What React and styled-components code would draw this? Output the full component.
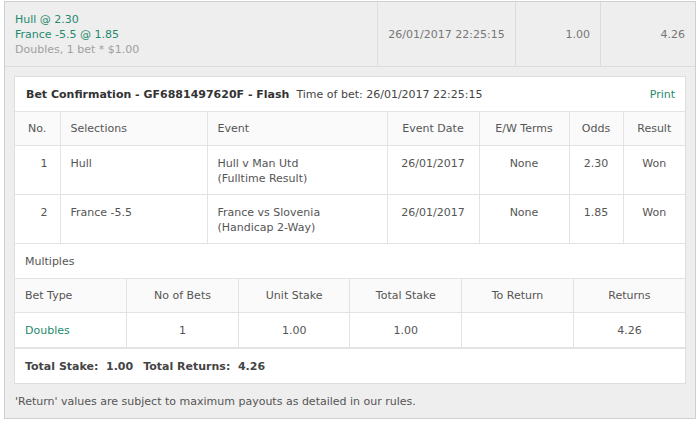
import styled, { createGlobalStyle } from "styled-components";

const GlobalStyle = createGlobalStyle`
  body {
    margin: 0;
    background: #ffffff;
    font-family: "DejaVu Sans", Verdana, sans-serif;
    font-size: 11px;
    color: #555;
  }
`;

const Wrapper = styled.div`
  margin: 1px 0 0 4px;
  width: 690px;
  border: 1px solid #cfcfcf;
  background: #eeeeee;
`;

const Summary = styled.div`
  display: grid;
  grid-template-columns: 372px 138px 85px 1fr;
  height: 64px;
  border-bottom: 1px solid #dcdcdc;
`;

const SummaryCell = styled.div`
  display: flex;
  flex-direction: column;
  justify-content: ${(p) => (p.$top ? "flex-start" : "center")};
  align-items: ${(p) =>
    p.$align === "right" ? "flex-end" : p.$align === "center" ? "center" : "flex-start"};
  padding: ${(p) => (p.$top ? "10px 10px 0" : "0 10px")};
  border-left: ${(p) => (p.$first ? "none" : "1px solid #dcdcdc")};
  color: #777;
  line-height: 15px;
`;

const Pick = styled.span`
  color: ${(p) => (p.$muted ? "#a0a0a0" : "#1f8a6d")};
`;

const Body = styled.div`
  padding: 9px 9px 0 9px;
`;

const Panel = styled.div`
  background: #ffffff;
  border: 1px solid #dedede;
`;

const PanelHead = styled.div`
  display: flex;
  align-items: center;
  height: 34px;
  padding: 0 10px 0 11px;
  border-bottom: 1px solid #e3e3e3;
  color: #444;
`;

const Title = styled.span`
  font-weight: bold;
  color: #333;
  margin-right: 7px;
`;

const PrintLink = styled.a`
  margin-left: auto;
  color: #1f8a6d;
  text-decoration: none;
`;

const Table = styled.table`
  width: 100%;
  border-collapse: collapse;
  table-layout: fixed;
`;

const Th = styled.th`
  font-weight: normal;
  background: #fafafa;
  height: 33px;
  padding: 0 10px;
  text-align: ${(p) => p.$align || "center"};
  border: 1px solid #e3e3e3;
  border-top: none;
  color: #555;
  &:first-child { border-left: none; }
  &:last-child { border-right: none; }
`;

const Td = styled.td`
  vertical-align: ${(p) => (p.$top ? "top" : "middle")};
  height: ${(p) => (p.$top ? "38px" : "34px")};
  padding: ${(p) => (p.$top ? "10px 10px 0" : "0 10px")};
  text-align: ${(p) => p.$align || "center"};
  padding-right: ${(p) => (p.$align === "right" ? "12px" : "10px")};
  border: 1px solid #e3e3e3;
  line-height: 15px;
  color: ${(p) => (p.$green ? "#1f8a6d" : "#555")};
  &:first-child { border-left: none; }
  &:last-child { border-right: none; }
`;

const SectionRow = styled.div`
  height: 34px;
  display: flex;
  align-items: center;
  padding-left: 10px;
  border-bottom: 1px solid #e3e3e3;
`;

const Totals = styled.div`
  height: 34px;
  display: flex;
  align-items: center;
  gap: 10px;
  padding-left: 10px;
  font-weight: bold;
  color: #444;
  border-top: 1px solid #e3e3e3;
`;

const Note = styled.p`
  margin: 0;
  height: 34px;
  display: flex;
  align-items: center;
  padding-left: 1px;
  color: #555;
`;

const selections = [
  { no: 1, sel: "Hull", event: "Hull v Man Utd", market: "(Fulltime Result)", date: "26/01/2017", ew: "None", odds: "2.30", result: "Won" },
  { no: 2, sel: "France -5.5", event: "France vs Slovenia", market: "(Handicap 2-Way)", date: "26/01/2017", ew: "None", odds: "1.85", result: "Won" },
];

export default function App() {
  return (
    <>
      <GlobalStyle />
      <Wrapper>
        <Summary>
          <SummaryCell $first $top>
            <Pick>Hull @ 2.30</Pick>
            <Pick>France -5.5 @ 1.85</Pick>
            <Pick $muted>Doubles, 1 bet * $1.00</Pick>
          </SummaryCell>
          <SummaryCell $align="center">26/01/2017 22:25:15</SummaryCell>
          <SummaryCell $align="right">1.00</SummaryCell>
          <SummaryCell $align="right">4.26</SummaryCell>
        </Summary>
        <Body>
          <Panel>
            <PanelHead>
              <Title>Bet Confirmation - GF6881497620F - Flash</Title>
              Time of bet: 26/01/2017 22:25:15
              <PrintLink href="#">Print</PrintLink>
            </PanelHead>
            <Table>
              <colgroup>
                <col style={{ width: 45 }} />
                <col style={{ width: 147 }} />
                <col style={{ width: 180 }} />
                <col style={{ width: 92 }} />
                <col style={{ width: 90 }} />
                <col style={{ width: 54 }} />
                <col />
              </colgroup>
              <thead>
                <tr>
                  <Th>No.</Th>
                  <Th $align="left">Selections</Th>
                  <Th $align="left">Event</Th>
                  <Th>Event Date</Th>
                  <Th>E/W Terms</Th>
                  <Th>Odds</Th>
                  <Th>Result</Th>
                </tr>
              </thead>
              <tbody>
                {selections.map((s) => (
                  <tr key={s.no}>
                    <Td $top $align="right">{s.no}</Td>
                    <Td $top $align="left">{s.sel}</Td>
                    <Td $top $align="left">
                      {s.event}
                      <br />
                      {s.market}
                    </Td>
                    <Td $top>{s.date}</Td>
                    <Td $top>{s.ew}</Td>
                    <Td $top>{s.odds}</Td>
                    <Td $top>{s.result}</Td>
                  </tr>
                ))}
              </tbody>
            </Table>
            <SectionRow>Multiples</SectionRow>
            <Table>
              <thead>
                <tr>
                  <Th $align="left">Bet Type</Th>
                  <Th>No of Bets</Th>
                  <Th>Unit Stake</Th>
                  <Th>Total Stake</Th>
                  <Th>To Return</Th>
                  <Th>Returns</Th>
                </tr>
              </thead>
              <tbody>
                <tr>
                  <Td $align="left" $green>Doubles</Td>
                  <Td>1</Td>
                  <Td>1.00</Td>
                  <Td>1.00</Td>
                  <Td></Td>
                  <Td>4.26</Td>
                </tr>
              </tbody>
            </Table>
            <Totals>
              <span>Total Stake:&nbsp; 1.00</span>
              <span>Total Returns:&nbsp; 4.26</span>
            </Totals>
          </Panel>
          <Note>'Return' values are subject to maximum payouts as detailed in our rules.</Note>
        </Body>
      </Wrapper>
    </>
  );
}
